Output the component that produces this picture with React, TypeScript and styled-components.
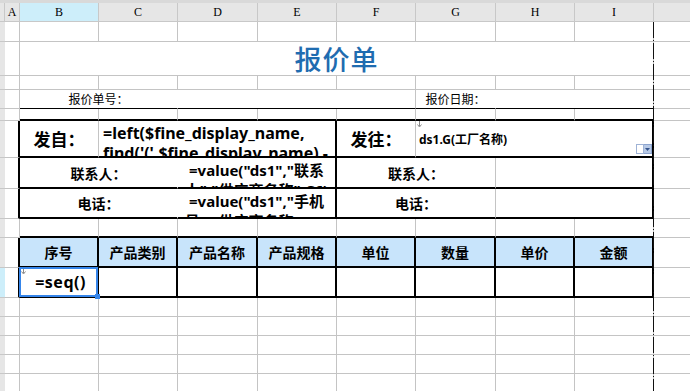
import React from "react";
import styled, { createGlobalStyle } from "styled-components";

type Edge = "gray" | "black" | "thin" | "none";

const GRID = "#c4c4c4";
const HEAD_LINE = "#c8c8c8";
const HEAD_BG = "#e6e6e6";
const SEL_BG = "#cdeefa";
const TABLE_BG = "#c8e4fb";

const edge = (e: Edge = "gray") => {
  if (e === "black") return "2px solid #000";
  if (e === "thin") return "1px solid #000";
  if (e === "none") return "1px solid transparent";
  return `1px solid ${GRID}`;
};

const GlobalStyle = createGlobalStyle`
  html, body {
    margin: 0;
    padding: 0;
    background: #ffffff;
    overflow: hidden;
  }
  body {
    font-family: "Noto Sans", "Noto Sans CJK SC", sans-serif;
    color: #000;
  }
`;

const Sheet = styled.div`
  position: relative;
  display: grid;
  grid-template-columns: 5px 15px 79px 79px 80px 79px 79px 80px 79px 79px 80px;
  grid-template-rows:
    3px 19px 20px 34px 14px 19px 12px 37px 31px 30px 19px 30px 30px
    repeat(6, 19px);
  width: 690px;
  height: 391px;
  overflow: hidden;
  background: #fff;
`;

const TopStrip = styled.div`
  grid-column: 1 / -1;
  background: #d9d9d9;
`;

const ColHead = styled.div<{ $sel?: boolean }>`
  box-sizing: border-box;
  background: ${(p) => (p.$sel ? SEL_BG : HEAD_BG)};
  border-right: 1px solid ${HEAD_LINE};
  border-bottom: 1px solid ${HEAD_LINE};
  display: flex;
  align-items: center;
  justify-content: center;
  font-family: "Liberation Serif", serif;
  font-size: 12px;
  overflow: hidden;
`;

const RowHead = styled.div<{ $sel?: boolean }>`
  box-sizing: border-box;
  background: ${(p) => (p.$sel ? SEL_BG : HEAD_BG)};
  border-bottom: 1px solid ${HEAD_LINE};
`;

const Cell = styled.div<{ $span?: number; $r?: Edge; $b?: Edge; $bg?: string; $open?: boolean }>`
  grid-column: span ${(p) => p.$span ?? 1};
  position: relative;
  z-index: ${(p) => (p.$open ? 2 : "auto")};
  box-sizing: border-box;
  min-width: 0;
  overflow: ${(p) => (p.$open ? "visible" : "hidden")};
  background: ${(p) => p.$bg ?? "#fff"};
  border-right: ${(p) => edge(p.$r)};
  border-bottom: ${(p) => edge(p.$b)};
  display: flex;
  align-items: center;
  justify-content: center;
`;

const Title = styled.span`
  font-family: "Noto Sans CJK SC", sans-serif;
  font-size: 27px;
  font-weight: 500;
  letter-spacing: 1px;
  color: #1f6cb0;
  line-height: 1;
`;

const Label = styled.span`
  font-family: "Noto Sans CJK SC", sans-serif;
  font-size: 12px;
  line-height: 1;
`;

const BoldLabel = styled.span<{ $size: number }>`
  font-family: "Noto Sans CJK SC", sans-serif;
  font-size: ${(p) => p.$size}px;
  font-weight: 700;
  line-height: 1;
`;

const Formula = styled.div<{ $size: number; $center?: boolean }>`
  align-self: flex-start;
  width: 100%;
  box-sizing: border-box;
  padding: 2px 4px 0;
  font-family: "Noto Sans", "Noto Sans CJK SC", sans-serif;
  font-size: ${(p) => p.$size}px;
  font-weight: 700;
  line-height: 20px;
  text-align: ${(p) => (p.$center ? "center" : "left")};
`;

const Bind = styled.span`
  align-self: center;
  margin-right: auto;
  padding-left: 3px;
  font-family: "Noto Sans", "Noto Sans CJK SC", sans-serif;
  font-size: 12px;
  font-weight: 700;
`;

const HeadText = styled.span`
  font-family: "Noto Sans CJK SC", sans-serif;
  font-size: 14px;
  font-weight: 700;
`;

const SeqText = styled.span`
  padding-left: 4px;
  font-family: "Noto Sans", sans-serif;
  font-size: 16px;
  font-weight: 700;
  letter-spacing: 0.5px;
`;

const Selection = styled.div`
  position: absolute;
  left: -1px;
  top: -1px;
  right: -1px;
  bottom: -1px;
  border: 2px solid #3585ea;
  pointer-events: none;
`;

const Handle = styled.div`
  position: absolute;
  right: -4px;
  bottom: -4px;
  width: 5px;
  height: 5px;
  background: #3585ea;
`;

const Marker = styled.svg`
  position: absolute;
  left: 1px;
  top: 0;
`;

const Drop = styled.div`
  position: absolute;
  right: 0;
  bottom: 2px;
  display: flex;
`;

const DropBox = styled.span`
  width: 6px;
  height: 8px;
  border: 1px solid #9fb3d6;
  background: #fff;
`;

const DropBtn = styled.span`
  width: 7px;
  height: 8px;
  border: 1px solid #8ca4cf;
  border-left: none;
  background: #b7c9e6;
  display: flex;
  align-items: center;
  justify-content: center;
`;

const PageBreak = styled.div`
  position: absolute;
  left: 653px;
  top: 22px;
  bottom: 0;
  width: 1px;
  background: repeating-linear-gradient(
    to bottom,
    #111 0 16px,
    transparent 16px 18px,
    #111 18px 19px,
    transparent 19px 21px
  );
  pointer-events: none;
`;

const COLS = ["A", "B", "C", "D", "E", "F", "G", "H", "I", "J"];
const HEADERS = ["序号", "产品类别", "产品名称", "产品规格", "单位", "数量", "单价", "金额"];

const plain = (n: number, r: Edge = "gray", b: Edge = "gray") =>
  Array.from({ length: n }, (_, i) => <Cell key={i} $r={r} $b={b} />);

const SheetRow: React.FC<{ sel?: boolean; boxed?: boolean; children?: React.ReactNode }> = ({
  sel,
  boxed,
  children,
}) => (
  <>
    <RowHead $sel={sel} />
    <Cell $r={boxed ? "black" : "gray"} />
    {children ?? plain(8)}
    <Cell />
  </>
);

const ArrowMark = () => (
  <Marker width="5" height="7" viewBox="0 0 5 7">
    <path d="M2.5 0v5M0.5 3.5l2 2.5 2-2.5" stroke="#8a8a8a" strokeWidth="1" fill="none" />
  </Marker>
);

export default function App() {
  return (
    <>
      <GlobalStyle />
      <Sheet>
        <TopStrip />
        <ColHead />
        {COLS.map((c) => (
          <ColHead key={c} $sel={c === "B"}>
            {c}
          </ColHead>
        ))}

        <SheetRow />
        <SheetRow>
          <Cell $span={8}>
            <Title>报价单</Title>
          </Cell>
        </SheetRow>
        <SheetRow />
        <SheetRow>
          <Cell $span={2} $r="none" $b="thin">
            <Label>报价单号：</Label>
          </Cell>
          <Cell $span={3} $b="thin" />
          <Cell $r="none" $b="thin">
            <Label>报价日期：</Label>
          </Cell>
          <Cell $span={2} $b="thin" />
        </SheetRow>
        <SheetRow>{plain(8, "gray", "black")}</SheetRow>

        <SheetRow boxed>
          <Cell $b="black">
            <BoldLabel $size={17}>发自：</BoldLabel>
          </Cell>
          <Cell $span={3} $r="black" $b="black">
            <Formula $size={16}>=left($fine_display_name, find('(',$fine_display_name) - 1)</Formula>
          </Cell>
          <Cell $b="black">
            <BoldLabel $size={17}>发往：</BoldLabel>
          </Cell>
          <Cell $span={3} $r="black" $b="black">
            <ArrowMark />
            <Bind>ds1.G(工厂名称)</Bind>
            <Drop>
              <DropBox />
              <DropBtn>
                <svg width="5" height="3" viewBox="0 0 5 3">
                  <path d="M0 0h5L2.5 3z" fill="#34548c" />
                </svg>
              </DropBtn>
            </Drop>
          </Cell>
        </SheetRow>
        <SheetRow boxed>
          <Cell $span={2} $r="none" $b="black">
            <BoldLabel $size={14}>联系人：</BoldLabel>
          </Cell>
          <Cell $span={2} $r="black" $b="black">
            <Formula $size={15} $center>=value("ds1","联系人","供应商名称",C6)</Formula>
          </Cell>
          <Cell $span={2} $b="black">
            <BoldLabel $size={14}>联系人：</BoldLabel>
          </Cell>
          <Cell $span={2} $r="black" $b="black" />
        </SheetRow>
        <SheetRow boxed>
          <Cell $span={2} $r="none" $b="black">
            <BoldLabel $size={14}>电话：</BoldLabel>
          </Cell>
          <Cell $span={2} $r="black" $b="black">
            <Formula $size={15} $center>=value("ds1","手机号","供应商名称",C6)</Formula>
          </Cell>
          <Cell $span={2} $b="black">
            <BoldLabel $size={14}>电话：</BoldLabel>
          </Cell>
          <Cell $span={2} $r="black" $b="black" />
        </SheetRow>

        <SheetRow>{plain(8, "gray", "black")}</SheetRow>
        <SheetRow boxed>
          {HEADERS.map((h) => (
            <Cell key={h} $r="black" $b="black" $bg={TABLE_BG}>
              <HeadText>{h}</HeadText>
            </Cell>
          ))}
        </SheetRow>
        <SheetRow boxed sel>
          <Cell $r="black" $b="black" $open>
            <ArrowMark />
            <SeqText>=seq()</SeqText>
            <Selection>
              <Handle />
            </Selection>
          </Cell>
          {plain(7, "black", "black")}
        </SheetRow>

        <SheetRow />
        <SheetRow />
        <SheetRow />
        <SheetRow />
        <SheetRow />
        <SheetRow />
        <PageBreak />
      </Sheet>
    </>
  );
}
